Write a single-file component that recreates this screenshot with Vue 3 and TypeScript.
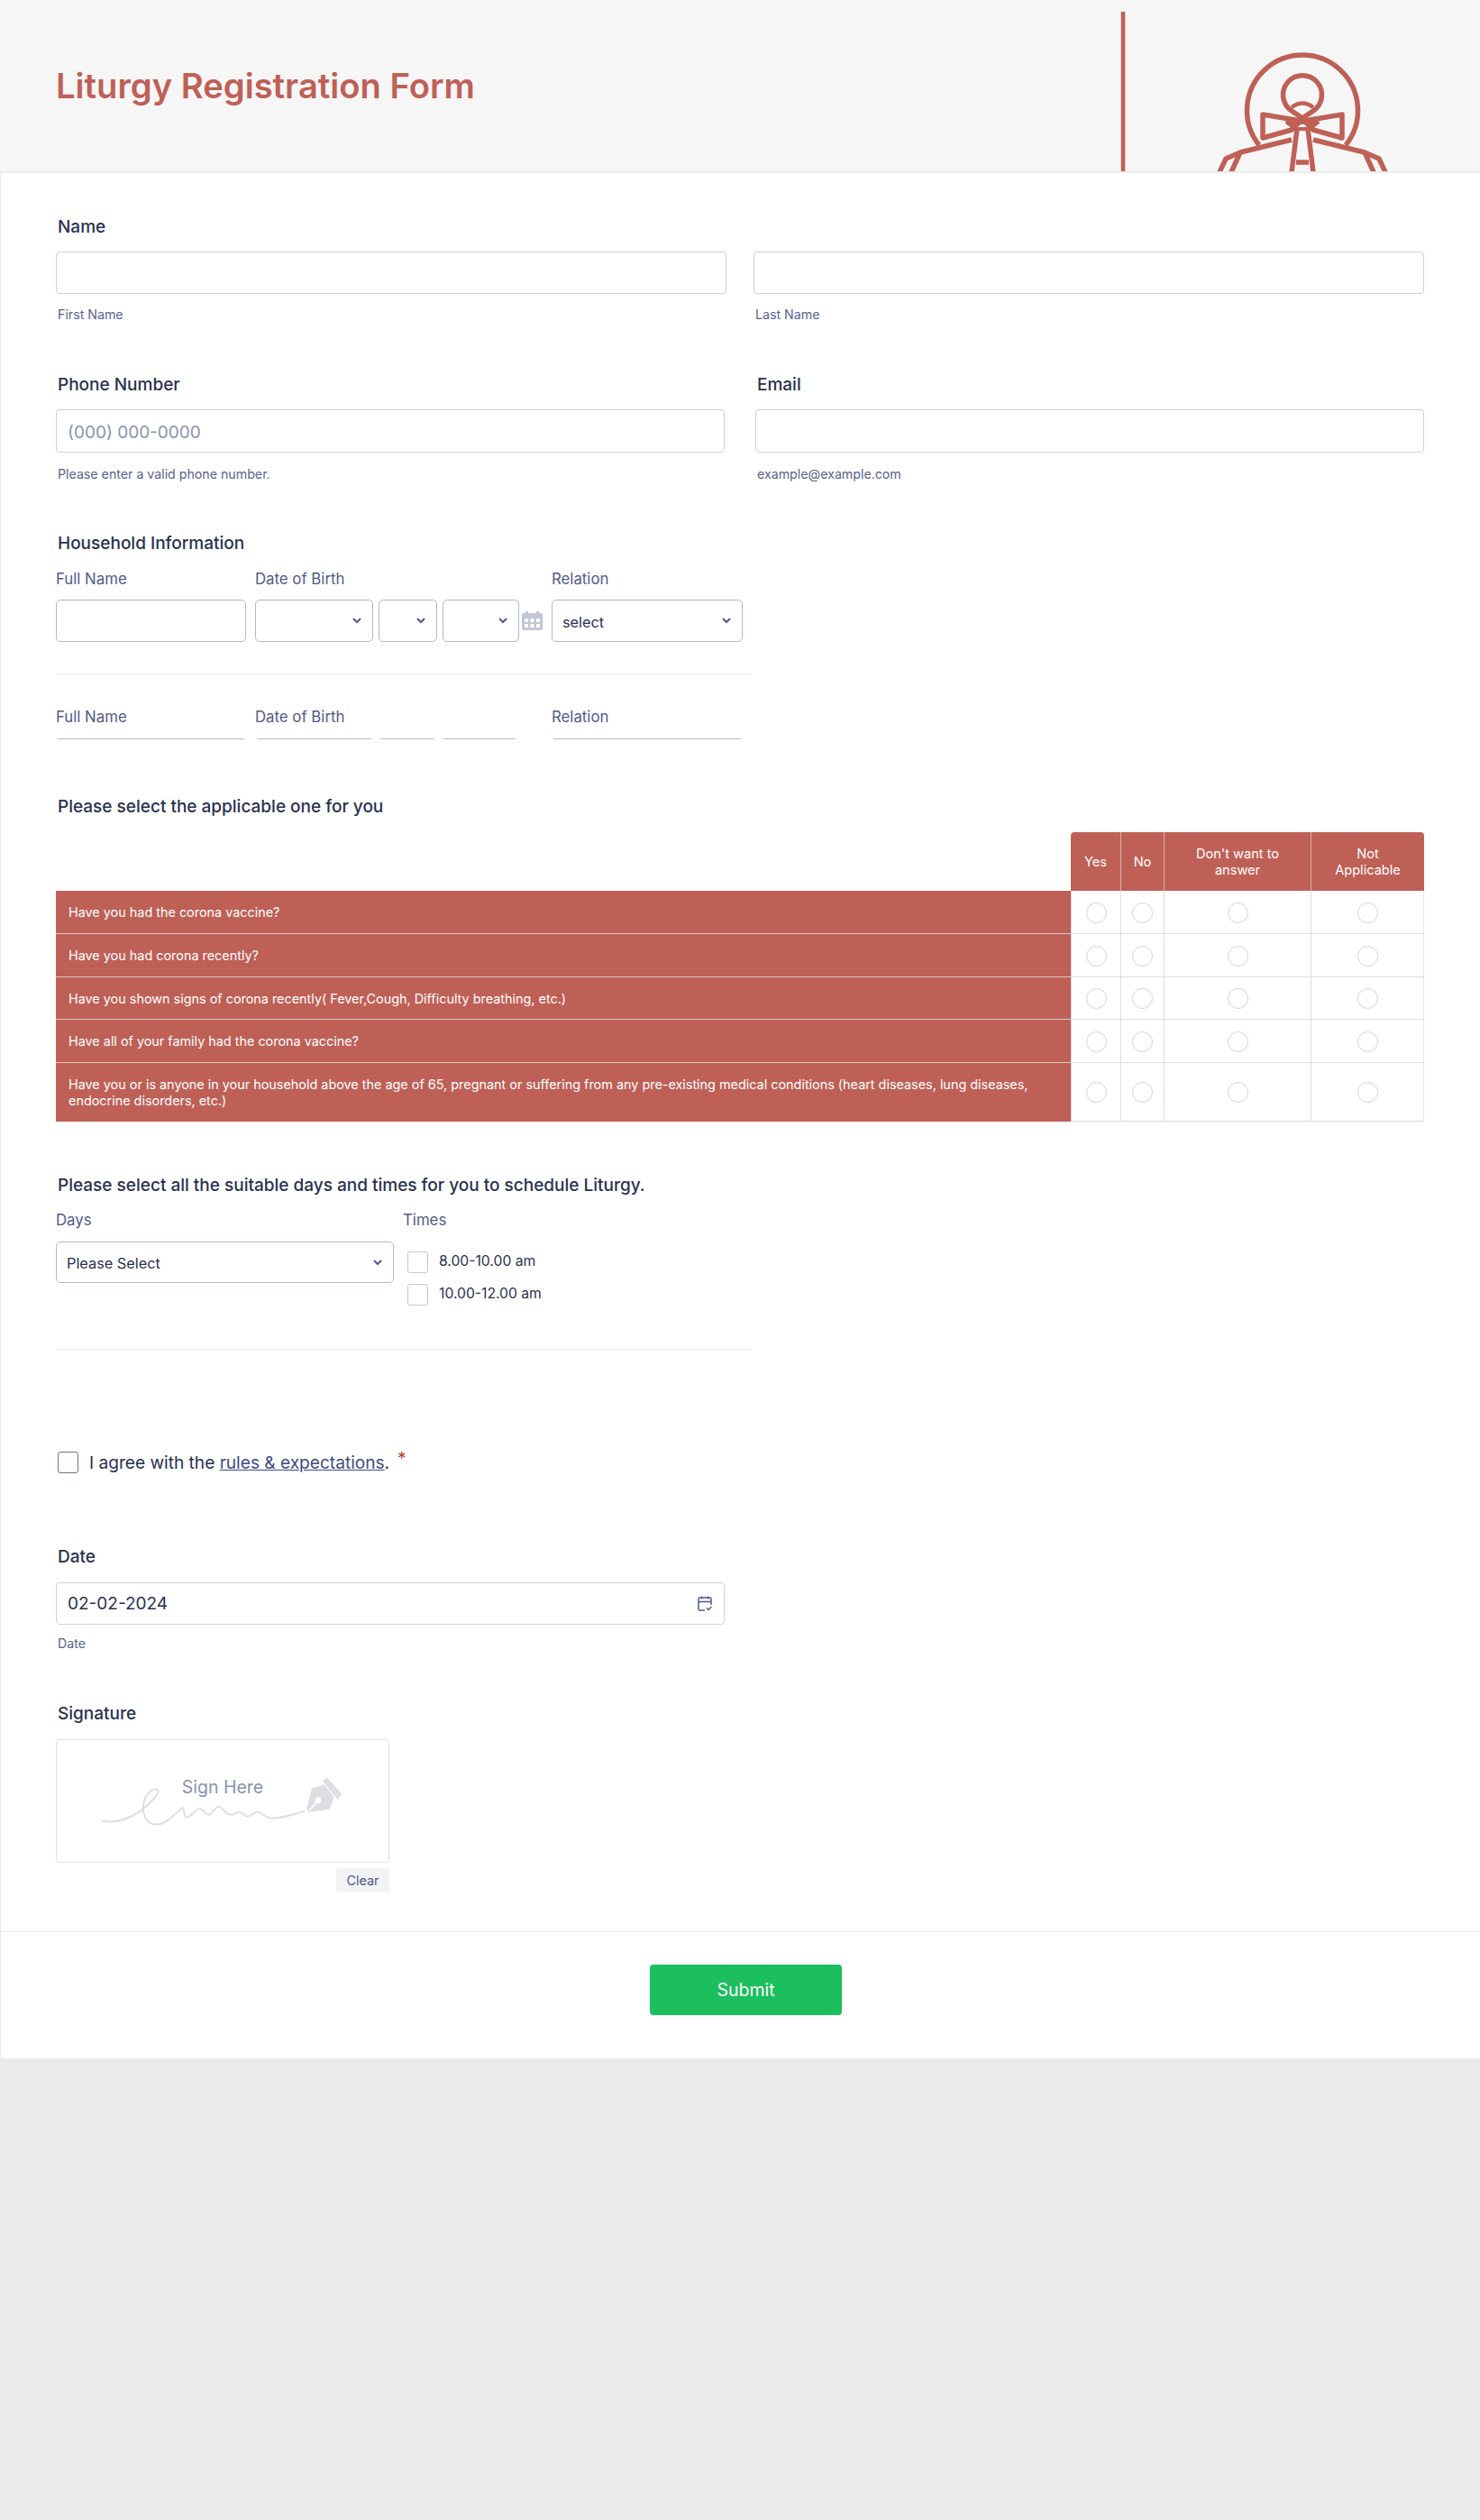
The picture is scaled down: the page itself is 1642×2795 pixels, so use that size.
<script setup lang="ts">
const rows: string[] = [
  'Have you had the corona vaccine?',
  'Have you had corona recently?',
  'Have you shown signs of corona recently( Fever,Cough, Difficulty breathing, etc.)',
  'Have all of your family had the corona vaccine?',
  'Have you or is anyone in your household above the age of 65, pregnant or suffering from any pre-existing medical conditions (heart diseases, lung diseases, endocrine disorders, etc.)'
]
const cols: string[] = ['Yes', 'No', "Don't want to answer", 'Not Applicable']
</script>

<template>
  <div class="page">
    <header class="head">
      <h1 class="title">Liturgy Registration Form</h1>
      <svg class="logo" viewBox="1240 0 402 191" width="402" height="191" fill="none" stroke="#bf6057" stroke-width="5.5" stroke-linejoin="round">
        <path d="M1246 13V191" stroke-width="4.5" />
        <path d="M1397 161A61.5 61.5 0 1 1 1493 161" />
        <path d="M1433 123A21.5 21.5 0 1 1 1457 123L1445 131Z" />
        <path d="M1433 119Q1445 110 1457 119" stroke-width="4.5" />
        <path d="M1401 127L1443 134L1433 144L1401 153Z" />
        <path d="M1489 127L1447 134L1457 144L1489 153Z" />
        <path d="M1428 136H1462L1452 143H1438Z" stroke-width="4" />
        <path d="M1439 143L1433 191M1451 143L1457 191M1438 180H1452" />
        <path d="M1433 155L1376 169L1360 176L1353 191M1376 169L1366 191" />
        <path d="M1457 155L1514 169L1530 176L1537 191M1514 169L1524 191" />
      </svg>
    </header>

    <main class="form">
      <section class="name-block">
        <div class="label">Name</div>
        <div class="pair pair-name">
          <div><input class="box" type="text" /><div class="sub">First Name</div></div>
          <div><input class="box" type="text" /><div class="sub">Last Name</div></div>
        </div>
      </section>

      <section class="pair pair-contact contact-block">
        <div>
          <div class="label">Phone Number</div>
          <input class="box contact-input" type="text" placeholder="(000) 000-0000" />
          <div class="sub contact-sub">Please enter a valid phone number.</div>
        </div>
        <div>
          <div class="label">Email</div>
          <input class="box contact-input" type="text" />
          <div class="sub contact-sub">example@example.com</div>
        </div>
      </section>

      <section class="household">
        <div class="label">Household Information</div>
        <div class="hh-grid hh-labels">
          <span class="cap">Full Name</span><span class="cap">Date of Birth</span><span class="cap">Relation</span>
        </div>
        <div class="hh-grid hh-controls">
          <div class="box strong"></div>
          <div class="dob">
            <div class="box strong sel m"><svg class="chev" viewBox="0 0 12 8"><path d="M2 2l4 4 4-4" /></svg></div>
            <div class="box strong sel d"><svg class="chev" viewBox="0 0 12 8"><path d="M2 2l4 4 4-4" /></svg></div>
            <div class="box strong sel y"><svg class="chev" viewBox="0 0 12 8"><path d="M2 2l4 4 4-4" /></svg></div>
            <svg class="cal-grey" viewBox="0 0 23 21">
              <rect x="0" y="2" width="23" height="19" rx="2" fill="#c1c7d6" />
              <rect x="4" y="0" width="3" height="4" fill="#c1c7d6" /><rect x="16" y="0" width="3" height="4" fill="#c1c7d6" />
              <g fill="#fff">
                <rect x="3" y="8" width="4" height="4" /><rect x="9.5" y="8" width="4" height="4" /><rect x="16" y="8" width="4" height="4" />
                <rect x="3" y="14" width="4" height="4" /><rect x="9.5" y="14" width="4" height="4" /><rect x="16" y="14" width="4" height="4" />
              </g>
            </svg>
          </div>
          <div class="box strong sel val">select<svg class="chev" viewBox="0 0 12 8"><path d="M2 2l4 4 4-4" /></svg></div>
        </div>
        <div class="rule hh-rule"></div>
        <div class="hh-grid hh-labels2">
          <span class="cap">Full Name</span><span class="cap">Date of Birth</span><span class="cap">Relation</span>
        </div>
        <div class="hh-grid hh-lines">
          <i class="ln"></i>
          <div class="dob ln-dob"><i class="ln l-m"></i><i class="ln l-d"></i><i class="ln l-y"></i></div>
          <i class="ln"></i>
        </div>
      </section>

      <section class="matrix-block">
        <div class="label">Please select the applicable one for you</div>
        <div class="matrix">
          <div class="corner"></div>
          <div v-for="c in cols" :key="c" class="th">{{ c }}</div>
          <template v-for="(r, i) in rows" :key="i">
            <div class="rowhead" :class="{ tall: i === 4 }">{{ r }}</div>
            <div v-for="c in cols" :key="c" class="cell" :class="{ tall: i === 4 }"><span class="radio"></span></div>
          </template>
        </div>
      </section>

      <section class="schedule">
        <div class="label">Please select all the suitable days and times for you to schedule Liturgy.</div>
        <div class="sch-grid">
          <div>
            <div class="cap">Days</div>
            <div class="box strong sel val days">Please Select<svg class="chev" viewBox="0 0 12 8"><path d="M2 2l4 4 4-4" /></svg></div>
          </div>
          <div>
            <div class="cap">Times</div>
            <div class="opts">
              <label class="opt"><span class="check"></span><span class="opt-text">8.00-10.00 am</span></label>
              <label class="opt"><span class="check"></span><span class="opt-text">10.00-12.00 am</span></label>
            </div>
          </div>
        </div>
        <div class="rule sch-rule"></div>
      </section>

      <section class="agree">
        <span class="check big"></span>
        <span class="agree-text">I agree with the <a class="link">rules &amp; expectations</a>.</span>
        <span class="req">*</span>
      </section>

      <section class="date-block">
        <div class="label">Date</div>
        <div class="box date-box">
          <span>02-02-2024</span>
          <svg class="cal" viewBox="0 0 16 17" fill="none" stroke="#4f5a8a" stroke-width="1.5">
            <path d="M8 16H2.5A1.5 1.5 0 0 1 1 14.500V3.500A1.500 1.500 0 0 1 2.500 2H13.500A1.500 1.500 0 0 1 15 3.500V10M1 6.500H15M4.500 0.500V3.500M11.500 0.500V3.500" />
            <path d="M10 13.500L12 15.500L15.500 12" />
          </svg>
        </div>
        <div class="sub date-sub">Date</div>
      </section>

      <section class="sign-block">
        <div class="label">Signature</div>
        <div class="sign">
          <svg class="sign-art" viewBox="63 1929 369 137" fill="none">
            <path d="M112 2020C128 2023 142 2018 156 2008C166 2000 176 1990 175 1986C172 1981 164 1987 160 1995C155 2008 160 2024 173 2024C186 2024 196 2008 203 2005C205 2012 204 2017 208 2016C213 2014 218 2006 222 2006C226 2007 228 2013 232 2013C236 2012 239 2004 243 2004C248 2005 251 2013 257 2013C261 2013 264 2009 267 2010C270 2011 272 2015 276 2015C280 2014 284 2009 288 2010C293 2012 297 2017 303 2017C316 2017 328 2012 340 2009" stroke="#dcdee4" stroke-width="2" />
            <path d="M342 2007L348 1983L362 1979L373 1993L368 2007L345 2010Z" fill="#dcdee4" />
            <circle cx="355" cy="1997" r="3.500" fill="#fff" />
            <path d="M345 2008L355 1997" stroke="#fff" stroke-width="1.500" />
            <path d="M360 1975L365 1971L382 1990L377 1996Z" fill="#dcdee4" />
          </svg>
          <span class="sign-text">Sign Here</span>
        </div>
        <div class="clear-row"><span class="clear">Clear</span></div>
      </section>

      <footer class="foot">
        <button class="submit" type="button">Submit</button>
      </footer>
    </main>
  </div>
</template>

<style>
html, body { margin: 0; background: #eaeaea; }
</style>

<style scoped>
.page {
  min-height: 2795px;
  background: #eaeaea;
  font-family: Inter, "Liberation Sans", sans-serif;
  color: #283150;
}
.head {
  height: 190px;
  background: #f6f6f6;
  border-bottom: 2px solid #ececec;
  display: flex;
  align-items: flex-start;
  justify-content: space-between;
  padding-left: 62px;
  overflow: hidden;
}
.title {
  margin: 72px 0 0;
  font-size: 38.2px;
  line-height: 46px;
  font-weight: 600;
  color: #bf6057;
}
.logo { display: block; flex: none; }
.form {
  background: #fff;
  border-left: 1px solid #ebebeb;
  padding: 0 62px 0 61px;
  height: 2091px;
  box-sizing: border-box;
  position: relative;
}
.label {
  font-size: 19px;
  line-height: 24px;
  font-weight: 500;
  padding-left: 2px;
  color: #283150;
}
.name-block { padding-top: 48px; }
.pair { display: grid; }
.pair-name { grid-template-columns: 744px 744px; column-gap: 30px; margin-top: 15px; }
.pair-contact { grid-template-columns: 742px 742px; column-gap: 34px; }
.box {
  display: block;
  box-sizing: border-box;
  width: 100%;
  height: 47px;
  border: 1px solid #ccd1dd;
  border-radius: 4px;
  background: #fff;
  font: inherit;
  outline: none;
  padding: 0;
}
.strong { border: 1.5px solid #b3b8c8; border-radius: 5px; }
.sub {
  margin-top: 14px;
  padding-left: 2px;
  font-size: 14.2px;
  line-height: 18px;
  color: #57638f;
}
.contact-block { margin-top: 57px; }
.contact-input {
  margin-top: 15px;
  height: 48px;
  padding: 2px 12px 0;
  font-size: 19px;
}
.contact-input::placeholder { color: #8894ab; opacity: 1; }
.contact-sub { margin-top: 15px; }
.household { margin-top: 56px; }
.hh-grid {
  display: grid;
  grid-template-columns: 211px 319px 212px;
  column-gap: 10px;
  width: 772px;
}
.cap {
  display: block;
  font-size: 16.8px;
  line-height: 20px;
  color: #4f5a8a;
}
.hh-labels { margin-top: 17px; }
.hh-controls { margin-top: 13px; }
.dob { display: flex; gap: 6px; align-items: center; }
.sel { position: relative; flex: none; }
.m { width: 131px; }
.d { width: 65px; }
.y { width: 85px; }
.chev {
  position: absolute;
  right: 11px;
  top: 18px;
  width: 12px;
  height: 8px;
  fill: none;
  stroke: #4f5a8a;
  stroke-width: 2;
}
.cal-grey { width: 23px; height: 21px; flex: none; margin-left: -3px; }
.val {
  display: flex;
  align-items: center;
  padding: 2px 0 0 11px;
  font-size: 16.3px;
}
.rule { height: 1px; background: #e8e9ee; width: 771px; }
.hh-rule { margin-top: 35px; }
.hh-labels2 { margin-top: 37px; }
.hh-lines { margin-top: 14px; }
.ln { display: block; height: 1px; background: #b6bbcb; margin: 0 2px; }
.ln-dob { gap: 0; }
.l-m { width: 127px; }
.l-d { width: 60px; margin: 0 5px 0 8px; }
.l-y { width: 80px; margin-left: 5px; }
.matrix-block { margin-top: 63px; }
.matrix {
  margin-top: 16px;
  display: grid;
  grid-template-columns: 1126px 55px 48px 163px 126px;
  grid-template-rows: 65px 48px 48px 47px 48px 65px;
}
.th {
  background: #bf6057;
  color: #fff;
  font-size: 14.6px;
  line-height: 18px;
  display: flex;
  align-items: center;
  justify-content: center;
  text-align: center;
  padding: 0 28px;
  border-left: 1px solid #d8b3ae;
  box-sizing: border-box;
}
.matrix > .th:nth-child(2) { padding: 0; border-top-left-radius: 4px; border-left: 0; }
.matrix > .th:nth-child(3) { padding: 0; }
.matrix > .th:nth-child(5) { padding: 0 30px; border-top-right-radius: 4px; }
.rowhead {
  background: #bf6057;
  color: #fff;
  font-size: 14.4px;
  line-height: 18px;
  display: flex;
  align-items: center;
  padding: 1px 20px 0 14px;
  border-bottom: 1px solid #dcc6c3;
  box-sizing: border-box;
}
.rowhead.tall { border-bottom: 0; }
.cell {
  display: flex;
  align-items: center;
  justify-content: center;
  padding-top: 1px;
  border-left: 1px solid #d9dde7;
  border-bottom: 1px solid #d9dde7;
  box-sizing: border-box;
}
.cell:nth-child(5n + 5) { border-right: 1px solid #e3e5ec; }
.radio {
  display: block;
  width: 23px;
  height: 23px;
  box-sizing: border-box;
  border: 1px solid #cfd3de;
  border-radius: 50%;
}
.schedule { margin-top: 59px; }
.sch-grid {
  display: grid;
  grid-template-columns: 375px 300px;
  column-gap: 10px;
  margin-top: 16px;
}
.days { margin-top: 14px; width: 375px; height: 46px; }
.opts { padding: 25px 0 0 5px; display: flex; flex-direction: column; gap: 12px; }
.opt { display: flex; align-items: flex-start; gap: 12px; height: 24px; }
.check {
  display: block;
  flex: none;
  box-sizing: border-box;
  width: 23px;
  height: 24px;
  border: 1px solid #c3c8d6;
  border-radius: 3px;
}
.opt-text { font-size: 15.7px; line-height: 22px; color: #283150; }
.sch-rule { margin-top: 48px; }
.agree {
  margin-top: 113px;
  padding-left: 2px;
  display: flex;
  align-items: center;
  height: 24px;
}
.check.big { border: 1.500px solid #6b7390; }
.agree-text { margin-left: 12px; font-size: 19.1px; line-height: 24px; }
.link { color: #3e4a85; text-decoration: underline; }
.req {
  margin: -8px 0 0 9px;
  color: #c0392b;
  font-size: 19px;
  line-height: 20px;
}
.date-block { margin-top: 81px; }
.date-box {
  margin-top: 16px;
  width: 742px;
  display: flex;
  align-items: center;
  justify-content: space-between;
  padding: 0 13px 0 12px;
  font-size: 19px;
}
.cal { width: 16px; height: 17px; flex: none; }
.date-sub { margin-top: 12px; }
.sign-block { margin-top: 57px; }
.sign {
  margin-top: 16px;
  width: 370px;
  height: 137px;
  box-sizing: border-box;
  border: 1px solid #dfe1e8;
  border-radius: 4px;
  position: relative;
  text-align: center;
}
.sign-art { position: absolute; left: 0; top: 0; width: 100%; height: 100%; }
.sign-text {
  position: relative;
  display: block;
  padding-top: 39px;
  font-size: 19.5px;
  line-height: 26px;
  color: #8894ab;
}
.clear-row { width: 370px; display: flex; justify-content: flex-end; margin-top: 6px; }
.clear {
  display: block;
  width: 59px;
  height: 27px;
  background: #f3f3f6;
  border-radius: 3px;
  text-align: center;
  font-size: 14.4px;
  line-height: 27px;
  color: #4f5a8a;
}
.foot {
  position: absolute;
  left: 0;
  right: 0;
  top: 1950px;
  height: 141px;
  border-top: 1px solid #ebebeb;
  display: flex;
  justify-content: center;
  padding: 36px 0 0 0;
  box-sizing: border-box;
}
.submit {
  width: 213px;
  height: 56px;
  margin-left: 12px;
  border: 0;
  border-radius: 4px;
  background: #1bbf5e;
  color: #fff;
  font: inherit;
  font-size: 19.5px;
}
</style>
